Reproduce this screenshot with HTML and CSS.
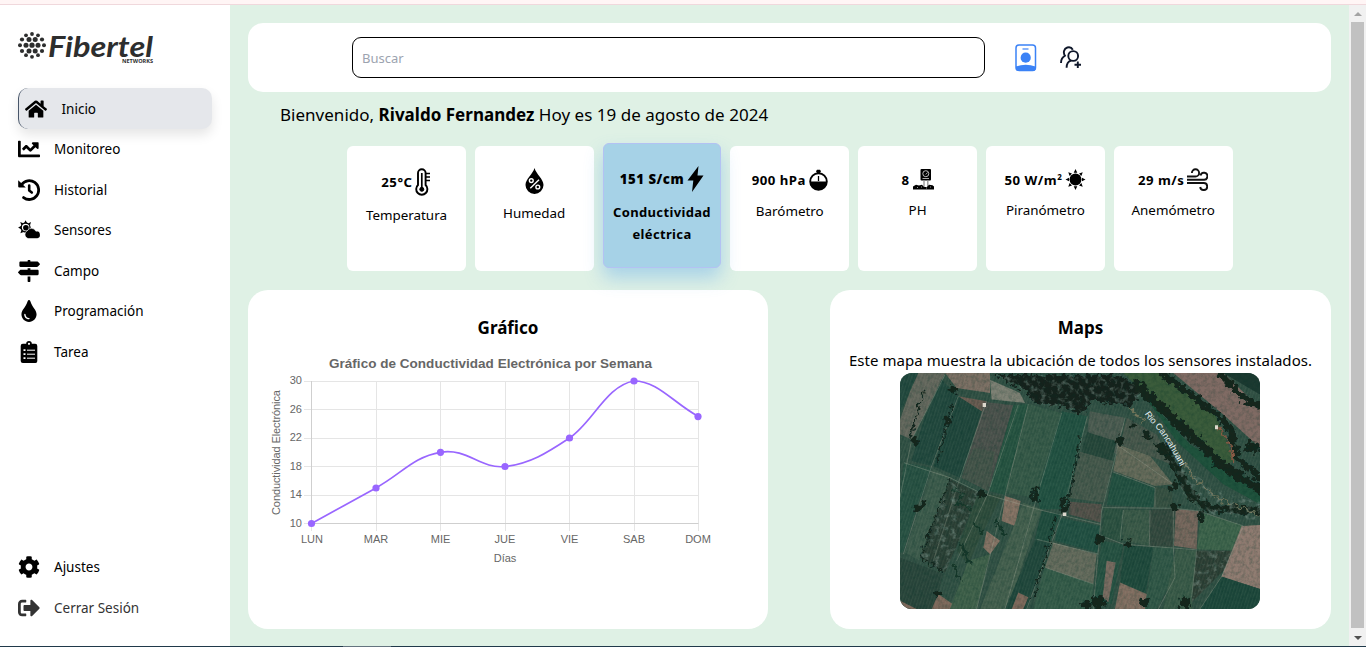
FILE: index.html
```html
<!DOCTYPE html>
<html lang="es">
<head>
<meta charset="utf-8">
<title>Fibertel Networks</title>
<link rel="stylesheet" href="styles.css">
</head>
<body>
<div class="topline"></div>
<div class="app">
  <aside class="sidebar">
    <svg class="logo" width="150" height="40" viewBox="16 28 150 40">
      <g fill="#2d2e2e">
        <circle cx="32" cy="34" r="1.9"/><circle cx="26" cy="35.3" r="1.9"/><circle cx="38" cy="35.3" r="1.9"/>
        <circle cx="22" cy="39.5" r="2.1"/><circle cx="29" cy="39.5" r="2.5"/><circle cx="35.2" cy="39.5" r="2.5"/><circle cx="42" cy="39.5" r="2.1"/>
        <circle cx="20" cy="45.2" r="2"/><circle cx="26" cy="45.2" r="2.5"/><circle cx="32" cy="45.2" r="2.6"/><circle cx="38" cy="45.2" r="2.5"/><circle cx="44" cy="45.2" r="2"/>
        <circle cx="22" cy="51" r="2.1"/><circle cx="29" cy="51" r="2.5"/><circle cx="35.2" cy="51" r="2.5"/><circle cx="42" cy="51" r="2.1"/>
        <circle cx="26" cy="55.2" r="1.9"/><circle cx="32" cy="56.8" r="1.9"/><circle cx="38" cy="55.2" r="1.9"/>
        <text class="logo-name" x="48" y="56.5" textLength="105" lengthAdjust="spacingAndGlyphs">Fibertel</text>
        <text class="logo-sub" x="122" y="63" textLength="31" lengthAdjust="spacingAndGlyphs">NETWORKS</text>
      </g>
    </svg>
    <nav class="nav">
      <a class="nav-item active"><svg viewBox="0 0 576 512"><path d="M280.37 148.26L96 300.11V464a16 16 0 0 0 16 16l112.06-.29a16 16 0 0 0 15.92-16V368a16 16 0 0 1 16-16h64a16 16 0 0 1 16 16v95.64a16 16 0 0 0 16 16.05L464 480a16 16 0 0 0 16-16V300L295.67 148.26a12.19 12.19 0 0 0-15.3 0zM571.6 251.47L488 182.56V44.05a12 12 0 0 0-12-12h-56a12 12 0 0 0-12 12v72.61L318.47 43a48 48 0 0 0-61 0L4.34 251.47a12 12 0 0 0-1.6 16.9l25.5 31A12 12 0 0 0 45.15 301l235.22-193.74a12.19 12.19 0 0 1 15.3 0L530.9 301a12 12 0 0 0 16.9-1.6l25.5-31a12 12 0 0 0-1.7-16.93z"/></svg><span>Inicio</span></a>
      <a class="nav-item"><svg viewBox="0 0 512 512"><path d="M496 384H64V80c0-8.84-7.16-16-16-16H16C7.16 64 0 71.16 0 80v336c0 17.67 14.33 32 32 32h464c8.84 0 16-7.16 16-16v-32c0-8.84-7.16-16-16-16zM464 96H345.94c-21.38 0-32.09 25.85-16.97 40.97l32.4 32.4L288 242.75l-73.37-73.37c-12.5-12.5-32.76-12.5-45.25 0l-68.69 68.69c-6.25 6.25-6.25 16.38 0 22.63l22.62 22.62c6.25 6.25 16.38 6.25 22.63 0L192 237.25l73.37 73.37c12.5 12.5 32.76 12.5 45.25 0l96-96 32.4 32.4c15.12 15.12 40.97 4.41 40.97-16.97V112c.01-8.84-7.15-16-15.99-16z"/></svg><span>Monitoreo</span></a>
      <a class="nav-item"><svg viewBox="0 0 22 22"><path fill="none" stroke="#000" stroke-width="2.8" stroke-linecap="round" d="M3.6 5.6A9.4 9.4 0 1 1 5.6 18.6"/><path d="M.2 1.3 7.8 8.5H1.3Q.2 8.5.2 7.4z"/><path fill="none" stroke="#000" stroke-width="2.6" stroke-linecap="round" stroke-linejoin="round" d="M11.2 6.6V11.5L13.8 13.5"/></svg><span>Historial</span></a>
      <a class="nav-item"><svg viewBox="0 0 22 22"><path d="M7.6 1.3 9.2 4.2H6zM2.2 3 5.3 4.3 3.5 6.3zM.1 8.6 3 7V10.2zM2.4 14.2 3.4 11 5.6 13zM13 3 12 6.3 10 4.5z"/><circle cx="7.6" cy="8.6" r="4.4" fill="none" stroke="#000" stroke-width="1.3"/><circle cx="7.9" cy="8.8" r="2.8"/><path stroke="#fff" stroke-width=".6" d="M10 19.6a4.100 4.100 0 0 1-.9-7.600 4.900 4.900 0 0 1 8.800.2 3.700 3.700 0 0 1 1.300 7.400z"/></svg><span>Sensores</span></a>
      <a class="nav-item"><svg viewBox="0 0 512 512"><path d="M507.31 84.69L464 41.37c-6-6-14.14-9.37-22.63-9.37H288V16c0-8.84-7.16-16-16-16h-32c-8.84 0-16 7.16-16 16v16H56c-13.25 0-24 10.75-24 24v80c0 13.25 10.75 24 24 24h385.37c8.49 0 16.62-3.37 22.63-9.37l43.31-43.31c6.25-6.26 6.25-16.38 0-22.63zM224 496c0 8.84 7.16 16 16 16h32c8.84 0 16-7.16 16-16V384h-64v112zm232-272H288v-32h-64v32H70.63c-8.49 0-16.62 3.37-22.63 9.37L4.69 276.69c-6.25 6.25-6.25 16.38 0 22.63L48 342.63c6 6 14.14 9.37 22.63 9.37H456c13.25 0 24-10.75 24-24v-80c0-13.25-10.75-24-24-24z"/></svg><span>Campo</span></a>
      <a class="nav-item"><svg viewBox="0 0 352 512"><path d="M205.22 22.09c-7.94-28.78-49.44-30.12-58.44 0C100.01 179.85 0 222.72 0 333.91 0 432.35 78.72 512 176 512s176-79.65 176-178.09c0-111.75-99.79-153.34-146.78-311.82zM176 448c-61.75 0-112-50.25-112-112 0-8.84 7.16-16 16-16s16 7.16 16 16c0 44.11 35.89 80 80 80 8.84 0 16 7.16 16 16s-7.16 16-16 16z"/></svg><span>Programación</span></a>
      <a class="nav-item"><svg viewBox="0 0 22 22"><path fill-rule="evenodd" d="M4.8 2.8H8.2a2.8 2.8 0 0 1 5.6 0H17.2a2.1 2.1 0 0 1 2.1 2.1V20a2 2 0 0 1-2.1 2H4.8a2.1 2.1 0 0 1-2.1-2V4.9a2.1 2.1 0 0 1 2.1-2.1zM11 1.7a1.1 1.1 0 1 0 0 2.2 1.1 1.1 0 0 0 0-2.2z"/><path stroke="#fff" stroke-width="1" d="M9 9.2h8M9 13.2h8M9 17.2h8"/><path stroke="#fff" stroke-width="1.8" d="M5.5 9.2h2M5.5 13.2h2M5.5 17.2h2"/></svg><span>Tarea</span></a>
    </nav>
    <nav class="nav nav-end">
      <a class="nav-item"><svg viewBox="0 0 512 512"><path d="M487.4 315.7l-42.6-24.6c4.3-23.2 4.3-47 0-70.2l42.6-24.6c4.9-2.8 7.1-8.6 5.5-14-11.1-35.6-30-67.8-54.7-94.6-3.8-4.1-10-5.1-14.8-2.3L380.8 110c-17.9-15.4-38.5-27.3-60.8-35.1V25.8c0-5.6-3.9-10.5-9.4-11.7-36.7-8.2-74.3-7.8-109.2 0-5.5 1.2-9.4 6.1-9.4 11.7V75c-22.2 7.9-42.8 19.8-60.8 35.1L88.7 85.5c-4.9-2.8-11-1.9-14.8 2.3-24.7 26.7-43.6 58.9-54.7 94.6-1.7 5.4.6 11.2 5.5 14L67.3 221c-4.3 23.2-4.3 47 0 70.2l-42.6 24.6c-4.9 2.8-7.1 8.6-5.5 14 11.1 35.6 30 67.8 54.7 94.6 3.8 4.1 10 5.1 14.8 2.3l42.6-24.6c17.9 15.4 38.5 27.3 60.8 35.1v49.2c0 5.6 3.9 10.5 9.4 11.7 36.7 8.2 74.3 7.8 109.2 0 5.5-1.2 9.4-6.1 9.4-11.7v-49.2c22.2-7.9 42.8-19.8 60.8-35.1l42.6 24.6c4.9 2.8 11 1.9 14.8-2.3 24.7-26.7 43.6-58.9 54.7-94.6 1.5-5.5-.7-11.3-5.6-14.1zM256 336c-44.1 0-80-35.9-80-80s35.9-80 80-80 80 35.9 80 80-35.9 80-80 80z"/></svg><span>Ajustes</span></a>
      <a class="nav-item muted"><svg viewBox="0 0 512 512"><path d="M497 273L329 441c-15 15-41 4.5-41-17v-96H152c-13.3 0-24-10.7-24-24v-96c0-13.3 10.7-24 24-24h136V88c0-21.4 25.9-32 41-17l168 168c9.3 9.4 9.3 24.6 0 34zM192 436v-40c0-6.6-5.4-12-12-12H96c-17.7 0-32-14.3-32-32V160c0-17.7 14.3-32 32-32h84c6.6 0 12-5.4 12-12V76c0-6.6-5.4-12-12-12H96c-53 0-96 43-96 96v192c0 53 43 96 96 96h84c6.6 0 12-5.4 12-12z"/></svg><span>Cerrar Sesión</span></a>
    </nav>
  </aside>

  <main class="main">
    <header class="header">
      <input class="search" type="text" placeholder="Buscar">
      <svg class="badge-icon" width="22" height="28" viewBox="0 0 22 28"><rect x="1" y="1" width="19.5" height="25.5" rx="3" fill="#fff" stroke="#3b82f6" stroke-width="1.5"/><path d="M7.5 5h6" stroke="#3b82f6" stroke-width="1.2"/><circle cx="10.7" cy="13.7" r="5.1" fill="#3b82f6"/><path fill="#3b82f6" d="M1 22.5Q10.7 19 20.5 22.5V24.5a2.5 2.5 0 0 1-2.5 2.5H3.5A2.5 2.5 0 0 1 1 24.5z"/></svg>
      <svg class="users-icon" width="22" height="23" viewBox="0 0 22 23" fill="none" stroke="#0f172a" stroke-width="1.9"><circle cx="13.2" cy="10" r="4.9"/><path d="M6.6 21.7C6.6 17.5 8.5 15.5 11 14.7M1 17C1 13.4 2.6 11 5.3 9.7M5.5 10.3C2.5 7 4 2.5 7.3 1.5 9.8.8 11.8 1.8 12.8 3.7M17.8 15.5V22M14.5 18.7H21"/></svg>
    </header>

    <p class="welcome">Bienvenido, <b>Rivaldo Fernandez</b> Hoy es 19 de agosto de 2024</p>

    <section class="cards">
      <article class="card"><div class="reading"><b>25°C</b><svg width="16" height="28" viewBox="0 0 16 28" fill="none" stroke="#000"><path stroke-width="1.9" d="M3 17V5a3.8 3.8 0 0 1 7.6 0v12a5.6 5.6 0 1 1-7.6 0z"/><path stroke-width="1.7" d="M6.8 5v15M11 5.5h4M11 9h4M11 12.5h4"/><circle cx="6.8" cy="21.3" r="2" fill="#000"/></svg></div><p>Temperatura</p></article>
      <article class="card"><div class="reading"><svg width="19" height="26" viewBox="0 0 19 26"><path d="M9.5 0C8 6 .5 11 .5 17a9 9 0 0 0 18 0C18.5 11 11 6 9.5 0z"/><g fill="none" stroke="#fff" stroke-width="1.4"><circle cx="6.3" cy="12.6" r="1.9"/><circle cx="12.8" cy="19" r="1.9"/><path d="M14 11.7 5.3 20.3"/></g></svg></div><p>Humedad</p></article>
      <article class="card selected"><div class="reading"><b>151 S/cm</b><svg width="17" height="28" viewBox="0 0 17 28"><path d="M11.5 1 .5 15.5H6.3L5 27 16.5 10.5H10.5z"/></svg></div><p>Conductividad eléctrica</p></article>
      <article class="card"><div class="reading"><b>900 hPa</b><svg width="19" height="24" viewBox="0 0 19 24"><circle cx="9.5" cy="13.5" r="8.3" fill="#fff" stroke="#000" stroke-width="1.9"/><path d="M1 13.5H18a8.5 8.5 0 0 1-17 0zM7 3.3 8 5h3l1-1.7-1-1.5H8z"/><path stroke="#000" stroke-width="1.3" d="M9.5 8v5"/></svg></div><p>Barómetro</p></article>
      <article class="card"><div class="reading"><b>8</b><svg width="21" height="23" viewBox="0 0 21 23"><rect x="7.5" y="1" width="10.5" height="11.5" rx="1"/><circle cx="12.8" cy="5.7" r="3" fill="none" stroke="#bbb"/><path d="M12.8 6.5 14.5 4.5M9.5 10.5h6.5" stroke="#aaa"/><path d="M11 12.5V19M14.8 12.5V19" stroke="#999" stroke-width="1.4"/><path d="M0 21.5V18.5L3 16.8 6 17.5 9 16.7 11 19 14 19 16 16.7 19.5 17.2 21 18.5V21.5z"/><path d="M4 19.5h1M8 19h1M17 19h1M13 20h1" stroke="#999"/></svg></div><p>PH</p></article>
      <article class="card"><div class="reading"><b>50 W/m<sup>2</sup></b><svg width="21" height="23" viewBox="0 0 21 23"><circle cx="10.5" cy="11.5" r="6"/><path d="M10.5 1 12.3 4.8H8.7zM10.5 22 12.3 18.2H8.7zM.5 11.5 4 9.7v3.6zM20.5 11.5 17 9.7v3.6zM3.3 4.3 7 5.6 4.6 8zM17.7 4.3 14 5.6 16.4 8zM3.3 18.7 7 17.4 4.6 15zM17.7 18.7 14 17.4 16.4 15z"/></svg></div><p>Piranómetro</p></article>
      <article class="card"><div class="reading"><b>29 m/s</b><svg width="21" height="23" viewBox="0 0 21 23" fill="none" stroke="#111" stroke-width="1.9"><path d="M0 8.5H8.5A3.6 3.6 0 1 0 4.9 4.9M0 11.7H16.5A3.5 3.5 0 1 0 13.5 7.5M0 15H16.5A3.5 3.5 0 1 1 13.2 19"/></svg></div><p>Anemómetro</p></article>
    </section>

    <section class="panels">
      <article class="panel panel-chart">
        <h2>Gráfico</h2>
        <svg class="chart" width="460" height="230" viewBox="264 345 460 230">
          <g fill="none" stroke="#e5e5e5" stroke-width="1">
            <path d="M304 381.5H698.5M304 409.5H698.5M304 438.5H698.5M304 466.5H698.5M304 495.5H698.5M304 523.5H311M376.5 381V531M440.5 381V531M505.5 381V531M569.5 381V531M634.5 381V531M698.5 381V531M311.5 524V531"/>
            <path stroke="#cfcfcf" d="M311.5 381V523.5H698.5"/>
          </g>
          <path fill="none" stroke="#9966ff" stroke-width="1.7" d="M311.5 523.5C337.3 509.3 350.2 502.1 376 487.9S413.3 456.8 440.5 452.3 480.1 469.3 505 466.5 546.3 453.4 569.5 438 606.2 385.6 634 381C657.8 381 672.7 402.4 698.5 416.6"/>
          <g fill="#9966ff"><circle cx="311.5" cy="523.5" r="3.6"/><circle cx="376" cy="488" r="3.6"/><circle cx="440.5" cy="452.3" r="3.6"/><circle cx="505" cy="466.5" r="3.6"/><circle cx="569.5" cy="438" r="3.6"/><circle cx="634" cy="381" r="3.6"/><circle cx="698" cy="416.6" r="3.6"/></g>
          <text class="chart-title" x="490.5" y="368" text-anchor="middle" textLength="323">Gráfico de Conductividad Electrónica por Semana</text>
          <g class="tick" text-anchor="end"><text x="302" y="384">30</text><text x="302" y="413">26</text><text x="302" y="441">22</text><text x="302" y="470">18</text><text x="302" y="498">14</text><text x="302" y="527">10</text></g>
          <g class="tick" text-anchor="middle"><text x="312" y="543">LUN</text><text x="376" y="543">MAR</text><text x="440.5" y="543">MIE</text><text x="505" y="543">JUE</text><text x="569.5" y="543">VIE</text><text x="634" y="543">SAB</text><text x="698" y="543">DOM</text><text x="505" y="562">Días</text><text transform="translate(280 452.5) rotate(-90)" textLength="125">Conductividad Electrónica</text></g>
        </svg>
      </article>
      <article class="panel panel-map">
        <h2>Maps</h2>
        <p>Este mapa muestra la ubicación de todos los sensores instalados.</p>
        <svg class="map" width="360" height="236" viewBox="30 25 1080 710" preserveAspectRatio="none">
          <defs>
            <filter id="grain" x="0" y="0" width="100%" height="100%"><feTurbulence type="fractalNoise" baseFrequency=".09" numOctaves="3" seed="4"/><feColorMatrix values="0 0 0 0 0  0 0 0 0 .03  0 0 0 0 .02  1.8 0 0 0 -.7"/></filter>
            <filter id="speckle" x="0" y="0" width="100%" height="100%"><feTurbulence type="fractalNoise" baseFrequency=".06" numOctaves="3" seed="12"/><feColorMatrix values="0 0 0 0 .2  0 0 0 0 .29  0 0 0 0 .25  0 2.4 0 0 -1.2" result="s"/><feComposite in="s" in2="SourceGraphic" operator="in"/></filter>
            <filter id="rough" x="-5%" y="-5%" width="110%" height="110%"><feTurbulence type="fractalNoise" baseFrequency=".07" numOctaves="2" seed="7" result="n"/><feDisplacementMap in="SourceGraphic" in2="n" scale="32" xChannelSelector="R" yChannelSelector="G"/></filter>
            <pattern id="rows" width="9" height="9" patternUnits="userSpaceOnUse" patternTransform="rotate(18)"><path d="M2 0V9" stroke="#a5b89b" stroke-opacity=".12" stroke-width="2.5"/></pattern>
          </defs>
          <rect x="30" y="25" width="1080" height="710" fill="#304f43"/>
          <path fill="#63665c" d="M80 25H165L65 225 30 210V165z"/>
          <path fill="#21473d" d="M30 25H85L30 145zM155 45 205 95 125 305 65 290 100 170z"/>
          <path fill="#1f453b" d="M205 95 275 140 210 340 130 305z"/>
          <path fill="#7a6d62" d="M165 25H300V85L200 70z"/><path fill="#68594f" d="M205 95 290 110 275 140z"/>
          <path fill="#7b7e72" d="M300 45 390 85 405 115 305 105z"/>
          <path fill="#4a504b" d="M285 112 370 122 295 380 215 340z"/><path fill="#435248" d="M250 250 315 262 295 380 215 340z"/>
          <path fill="#255240" d="M370 122 415 118 345 392 297 380z"/>
          <path fill="#355847" d="M415 118 515 145 435 400 345 385z"/>
          <path fill="#215041" d="M515 140 592 155 560 290 530 435 450 435 440 390z"/>
          <path fill="#4b5a50" d="M600 140 705 160 680 270 592 200z"/><path fill="#254539" d="M592 203 680 230 665 290 575 265z"/>
          <path fill="#45574b" d="M570 262 670 290 640 415 535 400z"/>
          <path fill="#46554a" d="M710 160 800 210 845 300 690 240z"/>
          <path fill="#636858" d="M685 240 780 275 850 360 795 365 670 320z"/>
          <path fill="#224f40" d="M668 325 795 370 790 430 650 422z"/><path fill="#354e40" d="M795 368 845 375 850 430 792 430z"/>
          <path fill="#275042" d="M42 295 125 310 95 400 30 390zM30 390 90 400 40 565 30 565z"/>
          <path fill="#3c5a4b" d="M130 312 180 340 150 430 90 590 45 565z"/>
          <path fill="#293d33" d="M180 345 265 385 220 500 165 625 90 580z"/>
          <path fill="#2e4b3b" d="M265 385 335 395 270 520 235 600 200 560z"/>
          <path fill="#857163" d="M345 395 392 410 375 485 335 470zM290 500 330 530 300 570 280 550z"/>
          <path fill="#435e4d" d="M400 415 455 435 425 520 355 735H270z"/>
          <path fill="#1f4b3d" d="M455 440 510 450 480 535 435 525z"/><path fill="#20463b" d="M435 527 480 537 410 735H345z"/>
          <path fill="#524f48" d="M540 412 635 420 632 475 535 450z"/><path fill="#214f42" d="M508 460 630 485 622 565 495 530z"/>
          <path fill="#63695b" d="M490 535 620 570 610 660 465 610z"/><path fill="#345a48" d="M463 612 612 660 600 735H430z"/>
          <path fill="#2c5040" d="M642 430 700 437 695 535 635 515z"/><path fill="#3a5847" d="M700 437 778 437V545L698 530z"/><path fill="#33473d" d="M778 437 855 432 850 548 778 545z"/>
          <path fill="#75655b" d="M857 435 925 440 920 555 852 545z"/><path fill="#3c624a" d="M932 445 1055 482 1035 560 922 555z"/>
          <path fill="#255041" d="M635 530 700 540 665 720 610 715z"/><path fill="#78695f" d="M650 590 677 595 655 715 638 700z"/><path fill="#1e483b" d="M703 543 790 550 765 700 690 660z"/><path fill="#816d60" d="M690 655 770 690 765 735H675z"/>
          <path fill="#305646" d="M790 550 850 550 850 640 800 735H765z"/><path fill="#395947" d="M857 555 918 560 905 735H820z"/><path fill="#2c3d33" d="M920 560 1025 560 1010 610 905 715z"/>
          <path fill="#8e796f" d="M1055 485 1110 482V675L995 637z"/><path fill="#1c463a" d="M995 638 1110 675V735H930z"/>
          <path fill="#28443a" d="M30 580 160 630 130 735H30z"/><path fill="#7c6659" d="M145 690 195 725V735H125zM30 710 80 735H30zM385 685 415 700 400 735H365z"/>
          <path fill="#3e5f49" d="M235 590 300 570 260 735H180z"/>
          <rect x="30" y="25" width="1080" height="710" fill="url(#rows)"/>
          <path fill="#3b5c3b" d="M700 25H820L975 150 1035 290 1000 300 860 180z"/><path fill="#806b64" d="M850 25H1000L1110 130V250L1000 150z"/><path fill="#1c3a31" d="M1000 25H1110V90z"/>
          <path fill="#20533d" d="M760 90 900 240 1110 365V420L1000 360 860 230z"/>
          <g fill="none" stroke="#a2a697" stroke-opacity=".45" stroke-width="2.5">
            <path d="M165 30 65 225 30 400M205 95 125 305 40 570M290 110 210 340 130 590M385 120 295 385 200 590M415 118 345 395 260 735M515 145 440 400 345 735M592 155 520 440 410 735M705 160 635 440 610 735M42 295 180 340 270 385 450 437 630 480M440 525 625 570M465 610 610 660M640 430 850 432 925 440 1060 485 995 637 930 735M850 430V550L855 640 805 735M780 437 778 545M700 437 690 530M680 240 850 360M668 322 795 370V430M635 515 700 540 920 557 905 700"/>
          </g>
          <g filter="url(#rough)">
            <path fill="#13241f" d="M310 30H690L760 80 720 125 650 115 610 105 570 150 520 125 440 120 400 75z"/>
            <g fill="none" stroke="#13261f" stroke-linecap="round">
              <path stroke-width="28" d="M740 60 900 210 1000 305 1110 375"/><path stroke-width="20" d="M820 30 970 140 1020 190 1040 280 1110 340M990 25 1060 100 1110 125"/><path stroke-width="24" d="M810 245 860 310 900 390 960 430 1110 440"/>
              <path stroke-width="17" d="M75 435 100 420M520 405V440M435 375V410M845 375 860 360M935 445V465M850 430H860"/>
              <path stroke-width="4" d="M90 580 165 625M180 345 90 580M100 80 60 220M185 120 140 300M500 460 430 700M570 220 530 440"/>
            </g>
            <g fill="#12251f"><circle cx="175" cy="165" r="12"/><circle cx="75" cy="230" r="11"/><circle cx="190" cy="73" r="12"/><circle cx="690" cy="230" r="14"/><circle cx="770" cy="210" r="12"/><circle cx="730" cy="180" r="9"/><circle cx="630" cy="525" r="15"/><circle cx="712" cy="540" r="12"/><circle cx="273" cy="390" r="12"/><circle cx="1085" cy="248" r="20"/><circle cx="765" cy="715" r="12"/><circle cx="885" cy="717" r="18"/><circle cx="625" cy="715" r="20"/><circle cx="590" cy="725" r="15"/><circle cx="825" cy="255" r="20"/><circle cx="145" cy="690" r="10"/></g>
            <path fill="none" stroke="#74765b" stroke-width="5" d="M885 300 920 350 980 400 1110 455M720 130 760 175"/>
            <path fill="none" stroke="#8a5a45" stroke-width="7" d="M990 190 1025 250 1030 290"/>
            <path fill="none" stroke="#18382a" stroke-width="7" d="M190 370 220 390 200 420 245 430M250 480 280 510M315 470 350 520M215 540 240 600M190 600 210 650"/>
          </g>
          <path filter="url(#speckle)" opacity=".75" d="M310 30H690L760 80 720 125 650 115 610 105 570 150 520 125 440 120 400 75zM820 230 880 290 960 370 1110 410V470L940 450 880 390zM180 345 265 385 220 500 165 625 90 580zM920 560 1025 560 1010 610 905 715z"/>
          <rect x="30" y="25" width="1080" height="710" filter="url(#grain)" opacity=".3"/>
          <path fill="#ddd8cd" d="M278 115h10v12h-10zM518 445h11v10h-11zM975 182h9v12h-9z"/>
          <path id="river" fill="none" d="M764 148C782 178 797 183 817 214S852 268 876 315"/>
          <text class="river"><textPath href="#river" textLength="192" lengthAdjust="spacingAndGlyphs">Rio Cancahuani</textPath></text>
        </svg>
      </article>
    </section>
  </main>
  <div class="scrollbar"><i class="up"></i><span class="thumb"></span><i class="down"></i></div>
</div>
<div class="bottomline"><span></span></div>
</body>
</html>
```
FILE: styles.css
```css
* { box-sizing: border-box; }
body {
  margin: 0;
  height: 647px;
  overflow: hidden;
  display: flex;
  flex-direction: column;
  font-family: "Noto Sans", "Open Sans", sans-serif;
  color: #000;
  background: #fff;
}
p, h2 { margin: 0; }
svg { display: block; flex: none; }
.topline { height: 5px; background: #fff5f5; border-bottom: 1px solid #f0d8dc; }
.bottomline { height: 1px; background: #20394a; padding-left: 343px; }
.bottomline span { display: block; width: 48px; height: 1px; background: #64747f; }
.app { height: 641px; display: flex; }

.sidebar { width: 230px; padding: 23px 18px 18px; display: flex; flex-direction: column; }
.logo { margin-left: -2px; overflow: visible; }
.logo-name { font: italic 700 29px Lato, "Open Sans", sans-serif; }
.logo-sub { font: 700 5px "Open Sans", sans-serif; }
.nav { margin-top: 20px; display: flex; flex-direction: column; }
.nav-end { margin-top: auto; }
.nav-item {
  height: 40.5px;
  display: flex;
  align-items: center;
  gap: 14px;
  font-size: 13.5px;
}
.nav-item svg { width: 22px; height: 22px; }
.nav-item.active {
  width: 194px;
  height: 41px;
  padding-left: 6px;
  gap: 14.5px;
  border-left: 1px solid #475569;
  border-radius: 10px;
  background: #e5e7eb;
  box-shadow: 0 6px 12px rgba(0, 0, 0, .1);
}
.nav-item.muted { color: #333; fill: #333; }

.main { width: 1119px; padding: 18px; background: #dff1e5; }
.header {
  height: 69px;
  padding-left: 104px;
  border-radius: 15px;
  background: #fff;
  display: flex;
  align-items: center;
}
.search {
  width: 633px;
  height: 41px;
  padding: 0 9px;
  border: 1px solid #000;
  border-radius: 9px;
  font: 13px "Noto Sans", sans-serif;
}
.search::placeholder { color: #9ca3af; }
.badge-icon { margin-left: 30px; }
.users-icon { margin-left: 23px; }
.welcome { height: 54px; padding: 10px 32px 0; font-size: 17px; line-height: 26px; letter-spacing: .02px; white-space: nowrap; }

.cards { display: flex; gap: 9px; padding-left: 99px; }
.card {
  width: 118.8px;
  height: 125px;
  padding-top: 22px;
  border-radius: 6px;
  background: #fff;
  text-align: center;
  font-size: 13.4px;
  line-height: 22px;
}
.card p { margin-top: 8px; }
.reading { display: flex; justify-content: center; align-items: center; gap: 3px; font-size: 13.2px; letter-spacing: .5px; white-space: nowrap; }
.reading sup { font-size: 8px; line-height: 0; }
.card.selected {
  margin-top: -3px;
  padding-top: 21px;
  border: 1px solid #b3c2f3;
  background: #a6d2e7;
  font-weight: 700;
  font-size: 13px;
  letter-spacing: .35px;
  box-shadow: 0 10px 18px rgba(96, 170, 235, .42);
  z-index: 1;
}

.panels { margin-top: 19px; display: flex; justify-content: space-between; }
.panel {
  height: 339px;
  padding-top: 24px;
  border-radius: 20px;
  background: #fff;
  display: flex;
  flex-direction: column;
  align-items: center;
}
.panel h2 { font-size: 17px; line-height: 28px; }
.panel-chart { width: 520px; }
.chart { margin: 3px 28px 0 0; font-family: "Liberation Sans", Arial, sans-serif; fill: #666; }
.chart-title { font-size: 13.5px; font-weight: 700; }
.tick { font-size: 11px; }
.panel-map { width: 501px; }
.panel-map p { margin-top: 6px; font-size: 15px; line-height: 25px; letter-spacing: .06px; white-space: nowrap; }
.map { margin-right: 1px; border-radius: 12px; }
.river { font: 27px "Liberation Sans", Arial, sans-serif; fill: #e4edf0; }

.scrollbar { width: 17px; padding: 7px 2px 6px; background: #f1f1f1; display: flex; flex-direction: column; align-items: center; gap: 5px; }
.scrollbar i { border: 4px solid transparent; height: 0; }
.up { border-top: 0 !important; border-bottom-color: #a3a3a3 !important; margin-bottom: 1px; }
.thumb { width: 13px; flex: 1; background: #c1c1c1; }
.down { border-bottom: 0 !important; border-top-color: #505050 !important; margin-top: 3px; }
```
